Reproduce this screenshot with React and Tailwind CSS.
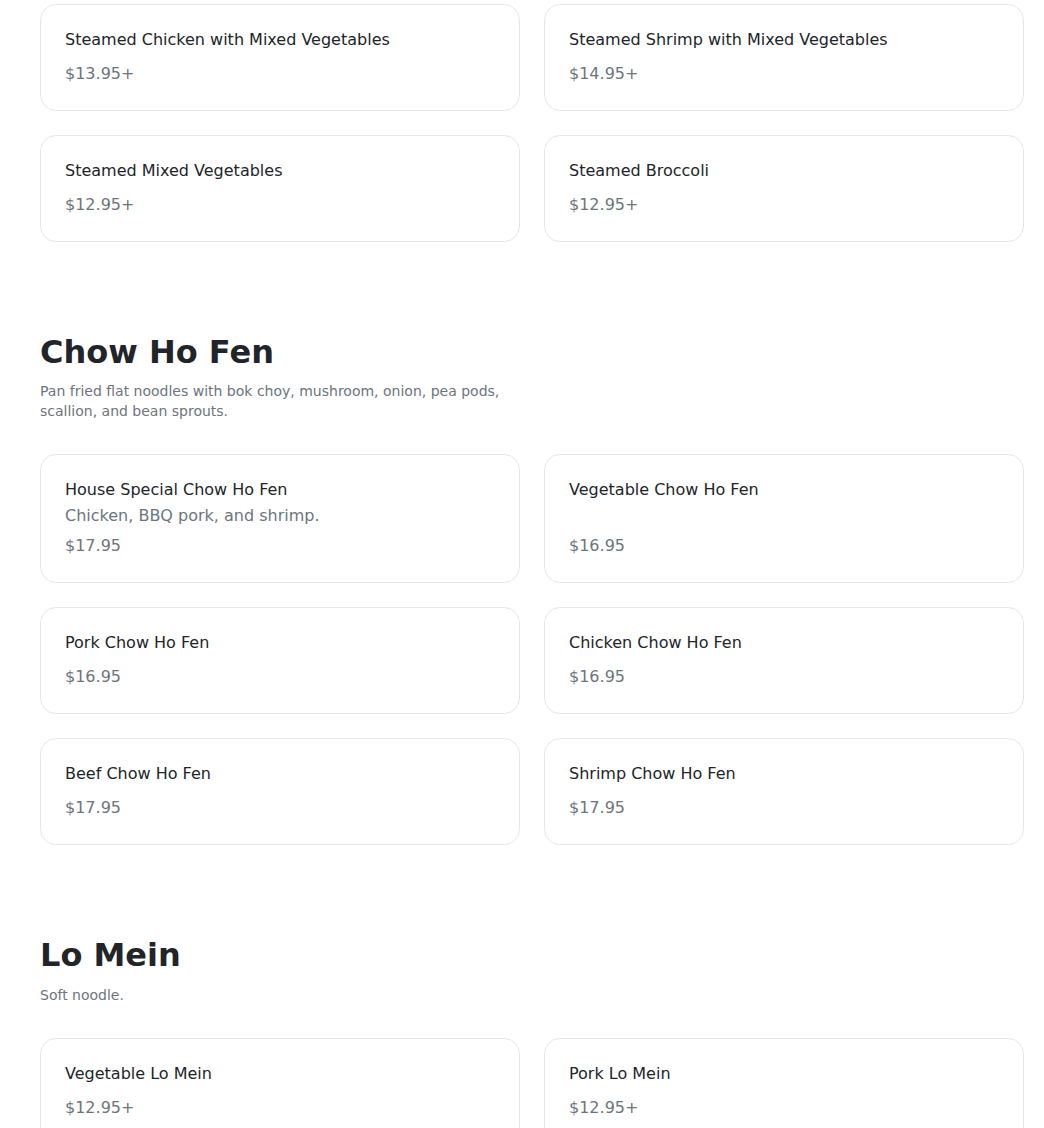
const sections = [
  {
    id: "steamed",
    items: [
      { name: "Steamed Chicken with Mixed Vegetables", price: "$13.95+" },
      { name: "Steamed Shrimp with Mixed Vegetables", price: "$14.95+" },
      { name: "Steamed Mixed Vegetables", price: "$12.95+" },
      { name: "Steamed Broccoli", price: "$12.95+" },
    ],
  },
  {
    id: "chow-ho-fen",
    title: "Chow Ho Fen",
    desc: "Pan fried flat noodles with bok choy, mushroom, onion, pea pods, scallion, and bean sprouts.",
    items: [
      { name: "House Special Chow Ho Fen", note: "Chicken, BBQ pork, and shrimp.", price: "$17.95" },
      { name: "Vegetable Chow Ho Fen", price: "$16.95" },
      { name: "Pork Chow Ho Fen", price: "$16.95" },
      { name: "Chicken Chow Ho Fen", price: "$16.95" },
      { name: "Beef Chow Ho Fen", price: "$17.95" },
      { name: "Shrimp Chow Ho Fen", price: "$17.95" },
    ],
  },
  {
    id: "lo-mein",
    title: "Lo Mein",
    desc: "Soft noodle.",
    items: [
      { name: "Vegetable Lo Mein", price: "$12.95+" },
      { name: "Pork Lo Mein", price: "$12.95+" },
      { name: "Chicken Lo Mein", price: "$13.95+" },
      { name: "Beef Lo Mein", price: "$14.95+" },
    ],
  },
];

function MenuCard({ item }) {
  return (
    <div className="flex flex-col border border-[#e4e6e9] rounded-2xl bg-white p-6">
      <div className="text-base leading-[22px] text-[#212529] mb-1">{item.name}</div>
      {item.note && (
        <div className="text-base leading-[22px] text-[#6c757d]">{item.note}</div>
      )}
      <div className="mt-auto pt-[7px] text-base leading-6 text-[#6c757d]">{item.price}</div>
    </div>
  );
}

export default function App() {
  return (
    <div
      className="min-h-screen bg-white pt-1 pl-10 pr-5 pb-10"
      style={{ fontFamily: '"DejaVu Sans", "Liberation Sans", sans-serif' }}
    >
      {sections.map((section, i) => (
        <section key={section.id} className={i > 0 ? "mt-[91px]" : ""}>
          {section.title && (
            <div className="mb-[33px]">
              {/* Section heading */}
              <h2 className="text-[32px] leading-[1.2] font-bold text-[#212529] mb-[10px]">
                {section.title}
              </h2>
              <p className="text-sm leading-5 text-[#6c757d] max-w-[480px]">{section.desc}</p>
            </div>
          )}
          <div className="grid grid-cols-2 gap-6">
            {section.items.map((item) => (
              <MenuCard key={item.name} item={item} />
            ))}
          </div>
        </section>
      ))}
    </div>
  );
}
